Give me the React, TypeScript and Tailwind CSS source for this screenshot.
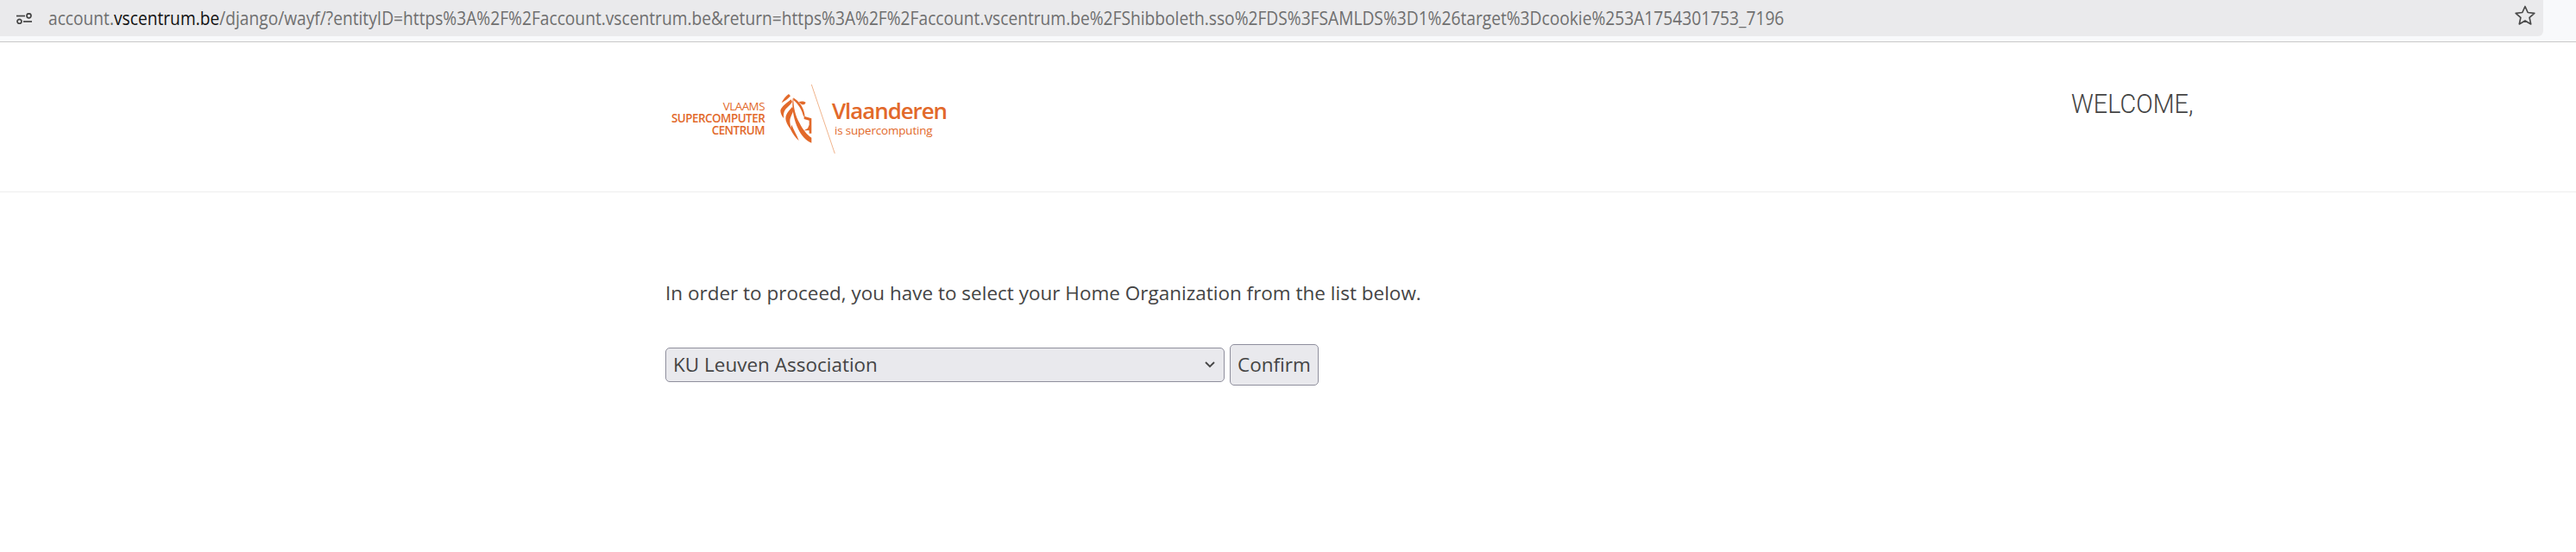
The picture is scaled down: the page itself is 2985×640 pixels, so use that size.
import React from "react";

function TuneIcon() {
  return (
    <svg width="20" height="13" viewBox="0 0 20 13" fill="none" stroke="#444" strokeWidth="1.7" className="shrink-0">
      <path d="M1 3.5h10" />
      <circle cx="15.5" cy="3.3" r="2.5" />
      <path d="M9 10h10" />
      <circle cx="4.5" cy="9.8" r="2.5" />
    </svg>
  );
}

function StarIcon() {
  return (
    <svg width="26" height="26" viewBox="0 0 26 26" fill="none" stroke="#4a4a4a" strokeWidth="1.7" strokeLinejoin="round" className="shrink-0 -mt-[6px]">
      <path d="M13 2.5l3.2 7 7.6.8-5.7 5.1 1.6 7.5L13 18.9l-6.7 4 1.6-7.5-5.7-5.1 7.6-.8z" />
    </svg>
  );
}

function LionMark() {
  return (
    <svg width="70" height="80" viewBox="420 40 210 240" className="shrink-0 ml-[14px]">
      <g fill="#e2692a">
        <path d="M462 73 C450 82 442 92 437 104 C448 98 460 90 468 80 Z" />
        <path d="M470 92 C455 105 438 115 433 130 C433 140 438 150 445 158 C442 142 446 130 455 122 C462 115 470 108 474 100 Z" />
        <path d="M474 118 C462 132 448 145 452 165 C456 180 465 190 472 200 C468 180 462 165 470 150 C474 142 478 135 478 125 Z" />
        <path d="M478 88 C478 120 485 150 500 175 C510 195 525 215 541 225 L541 243 C520 235 505 215 495 195 C480 165 472 125 476 88 Z" />
        <path d="M468 195 C475 210 485 225 497 235 C490 215 480 200 472 180 Z" />
        <path d="M478 86 L490 95 C505 108 515 125 518 150 L513 150 C508 128 495 108 478 94 Z" />
        <path d="M515 150 L541 158 L541 210 L533 210 L533 200 L515 200 L528 192 L533 180 L533 165 L515 160 Z" />
        <path d="M497 100 C505 97 515 98 521 102 C518 112 507 114 497 100 Z" />
      </g>
      <path d="M541 40 L622 280" stroke="#f0b48c" strokeWidth="3" fill="none" />
    </svg>
  );
}

export default function App() {
  return (
    <div className="w-[2985px] h-[640px] bg-white overflow-hidden font-['Open_Sans',sans-serif] text-[#444]">
      <div className="h-[49px] bg-[#f8f9fb] border-b border-[#c8c8c8]">
        <div className="h-[42px] w-[2947px] bg-[#eaeaec] rounded-br-[6px] flex items-center pl-[18px] pr-[8px]">
          <TuneIcon />
          <div className="ml-[18px] -mt-[2px] flex-1 min-w-0 text-[22px] text-[#6f6f6f] whitespace-nowrap leading-none origin-left scale-x-[0.872]">
            account.<span className="text-[#111]">vscentrum.be</span>/django/wayf/?entityID=https%3A%2F%2Faccount.vscentrum.be&amp;return=https%3A%2F%2Faccount.vscentrum.be%2FShibboleth.sso%2FDS%3FSAMLDS%3D1%26target%3Dcookie%253A1754301753_7196
          </div>
          <StarIcon />
        </div>
      </div>

      <header className="h-[174px] border-b border-[#eeeeee] pl-[778px] flex items-start">
        <div className="w-[1622px] flex items-start mt-[49px]">
          <div className="w-[108px] mt-[18px] text-right text-[#e2692a] text-[13.4px] leading-[14px] font-semibold tracking-[-0.5px]">
            <div className="font-normal">VLAAMS</div>
            <div className="whitespace-nowrap">SUPERCOMPUTER</div>
            <div>CENTRUM</div>
          </div>
          <LionMark />
          <div className="-ml-[6px] mt-[12px] text-[#e2692a]">
            <div className="text-[26px] leading-[36px] font-semibold tracking-[-1.1px] whitespace-nowrap">Vlaanderen</div>
            <div className="ml-[3px] -mt-[3px] text-[13.5px] leading-[16px] whitespace-nowrap tracking-[-0.2px]">is supercomputing</div>
          </div>
        </div>
        <div className="mt-[49px] text-[32px] leading-[44px] font-['Roboto',sans-serif] font-light whitespace-nowrap origin-left scale-x-[0.9]">
          WELCOME,
        </div>
      </header>

      <main className="pl-[771px]">
        <p className="mt-[102px] text-[22.5px] leading-[30px] whitespace-nowrap">
          In order to proceed, you have to select your Home Organization from the list below.
        </p>
        <div className="mt-[44px] flex items-center gap-[6px]">
          <div className="relative w-[648px] h-[40px]">
            <select className="w-full h-full appearance-none bg-[#e9e9ed] border border-[#8f8f9d] rounded-[5px] text-[22.5px] text-[#444] pl-[8px]">
              <option>KU Leuven Association</option>
            </select>
            <svg width="12" height="8" viewBox="0 0 12 8" fill="none" stroke="#444" strokeWidth="1.8" className="absolute right-[11px] top-[16px] pointer-events-none">
              <path d="M1 1l5 5 5-5" />
            </svg>
          </div>
          <button className="w-[103px] h-[48px] bg-[#e9e9ed] border border-[#8f8f9d] rounded-[5px] text-[22.5px] text-[#444]">
            Confirm
          </button>
        </div>
      </main>
    </div>
  );
}
